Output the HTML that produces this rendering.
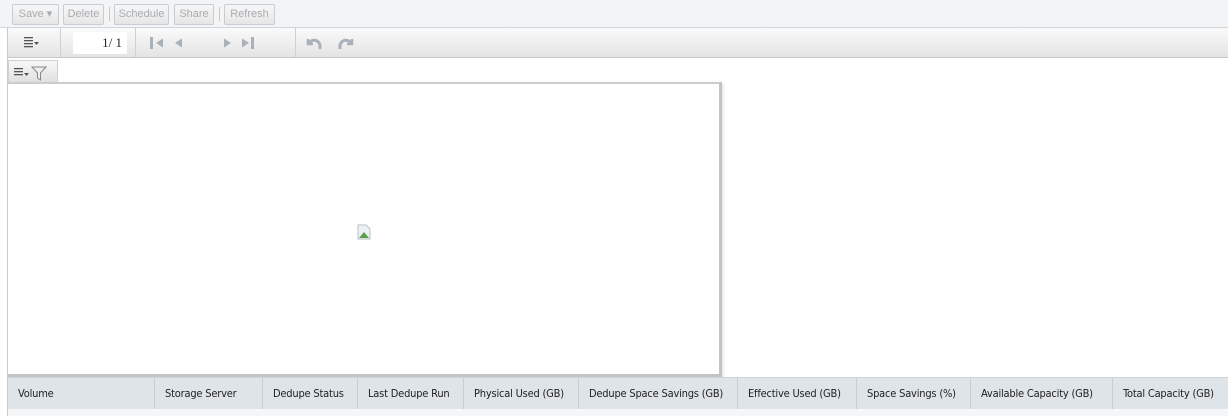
<!DOCTYPE html>
<html><head><style>
*{margin:0;padding:0;box-sizing:border-box}
body{width:1228px;height:416px;overflow:hidden;background:#fff;font-family:"Liberation Sans",Tahoma,sans-serif;position:relative}
.tb1{position:absolute;left:0;top:0;width:1228px;height:28px;background:#f2f4f5;border-bottom:1px solid #cfd5da}
.btn{position:absolute;top:4px;height:21px;border:1px solid #c9cdd1;border-radius:2px;background:linear-gradient(#f7f7f7,#e6e6e6);color:#a8acb0;font-size:11px;line-height:19px;text-align:center}
.sep{position:absolute;top:7px;width:1px;height:14px;background:#c8c8c8}
.tb2{position:absolute;left:7px;top:28px;width:1221px;height:30px;background:linear-gradient(#fafafa,#e4e4e4);border-bottom:1px solid #c8c8c8}
.vs{position:absolute;top:0;width:1px;height:29px;background:#d0d0d0}
.leftline{position:absolute;left:7px;top:28px;width:1px;height:388px;background:#c9c9c9}
.tab{position:absolute;left:8px;top:60px;width:50px;height:22px;background:linear-gradient(#f8f8f8,#e0e0e0);border:1px solid #d0d0d0;border-bottom:none}
.box{position:absolute;left:8px;top:82px;width:714px;height:295px;background:#fff;border-top:2px solid #ccc;border-right:3px solid #c4c4c4;border-bottom:3px solid #c4c4c4;box-shadow:1px 1px 3px #ddd}
.hdr{position:absolute;left:8px;top:377px;width:1220px;height:32px;background:#dfe4e8;border-top:1px solid #cfd4d8}
.hdr div{position:absolute;top:0;height:32px;line-height:32px;font-size:11px;color:#222;padding-left:10px;border-right:1px solid #c8cdd1;font-family:"DejaVu Sans Condensed","Liberation Sans",sans-serif;letter-spacing:-0.2px}
.row{position:absolute;left:8px;top:409px;width:1220px;height:7px;background:#f4f6f7}
</style></head><body>
<div class="tb1">
<div class="btn" style="left:12px;width:47px">Save ▾</div>
<div class="btn" style="left:63px;width:41px">Delete</div>
<div class="sep" style="left:109px"></div>
<div class="btn" style="left:114px;width:55px">Schedule</div>
<div class="btn" style="left:174px;width:40px">Share</div>
<div class="sep" style="left:219px"></div>
<div class="btn" style="left:224px;width:51px">Refresh</div>
</div>
<div class="tb2">
<svg style="position:absolute;left:17px;top:8px" width="20" height="14"><g fill="#555"><rect x="0" y="1" width="9" height="1.3"/><rect x="0" y="4" width="9" height="1.3"/><rect x="0" y="7" width="9" height="1.3"/><rect x="0" y="10" width="9" height="1.3"/><path d="M10 6h5l-2.5 3z"/></g></svg>
<div class="vs" style="left:53px"></div>
<div style="position:absolute;left:66px;top:4px;width:54px;height:22px;background:#fff;font-size:13px;line-height:22px;text-align:right;padding-right:5px;color:#222;font-family:'Liberation Serif',serif">1/ 1</div>
<div class="vs" style="left:128px"></div>
<svg style="position:absolute;left:143px;top:8px" width="120" height="14" fill="#a9b1ba"><rect x="0" y="1" width="3" height="12"/><path d="M6 7l7-4.5v9z"/><path d="M25 7l7-4.5v9z"/><path d="M74 2.5l7 4.5-7 4.5z"/><path d="M92 2.5l7 4.5-7 4.5z"/><rect x="101" y="1" width="3" height="12"/></svg>
<div class="vs" style="left:288px"></div>
<svg style="position:absolute;left:299px;top:8px" width="50" height="14"><path d="M2 3v5h5" fill="none" stroke="#a9b1ba" stroke-width="2.5"/><path d="M3 7c3-4 9-4 11 2v4" fill="none" stroke="#a9b1ba" stroke-width="3"/><path d="M46 3v5h-5" fill="none" stroke="#a9b1ba" stroke-width="2.5"/><path d="M45 7c-3-4-9-4-11 2v4" fill="none" stroke="#a9b1ba" stroke-width="3"/></svg>
</div>
<div class="leftline"></div>
<div class="tab"><svg style="position:absolute;left:5px;top:5px" width="44" height="15"><g fill="#555"><rect x="0" y="2" width="9" height="1.3"/><rect x="0" y="5" width="9" height="1.3"/><rect x="0" y="8" width="9" height="1.3"/><path d="M10 7h5l-2.5 3z"/></g><path d="M18 1h14l-5.5 6v7l-3-2v-5z" fill="#eee" stroke="#888" stroke-width="1"/></svg></div>
<div class="box">
<svg style="position:absolute;left:349px;top:140px" width="14" height="16"><path d="M1 1h8l4 4v10H1z" fill="#eef2f5" stroke="#b8c0c6"/><path d="M2 14l5-6 5 6z" fill="#5ea048"/></svg>
</div>
<div class="hdr">
<div style="left:0;width:147px">Volume</div>
<div style="left:147px;width:108px">Storage Server</div>
<div style="left:255px;width:95px">Dedupe Status</div>
<div style="left:350px;width:106px">Last Dedupe Run</div>
<div style="left:456px;width:115px">Physical Used (GB)</div>
<div style="left:571px;width:159px">Dedupe Space Savings (GB)</div>
<div style="left:730px;width:119px">Effective Used (GB)</div>
<div style="left:849px;width:114px">Space Savings (%)</div>
<div style="left:963px;width:142px">Available Capacity (GB)</div>
<div style="left:1105px;width:115px;border-right:none">Total Capacity (GB)</div>
</div>
<div class="row"></div>
</body></html>
